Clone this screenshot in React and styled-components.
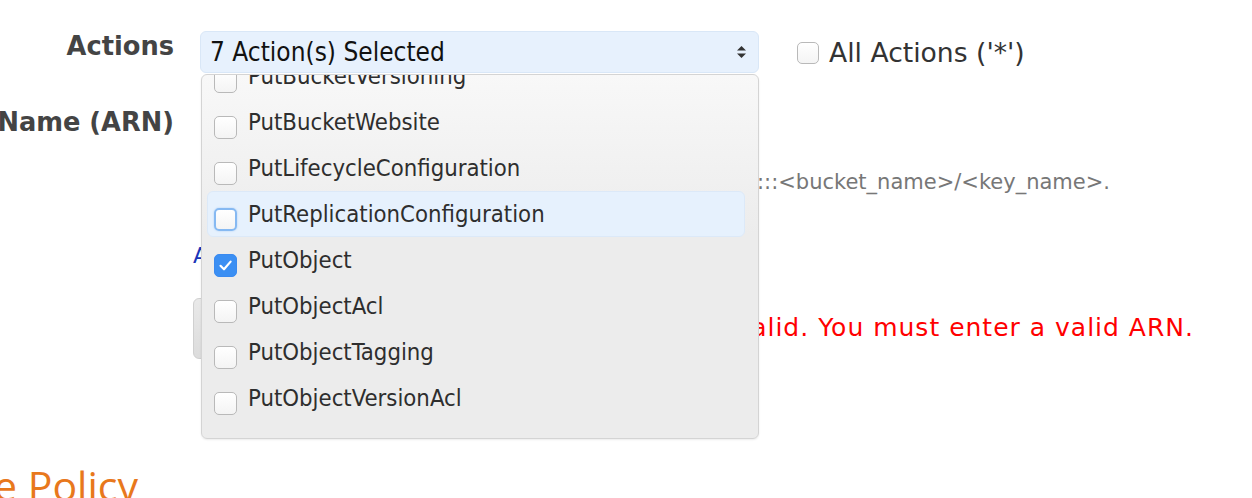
import React, {useEffect, useRef} from "react";
import styled, {createGlobalStyle} from "styled-components";

const GlobalStyle = createGlobalStyle`
  html, body {
    margin: 0;
    padding: 0;
    background: #ffffff;
    overflow: hidden;
  }
  body {
    font-family: "DejaVu Sans", Verdana, sans-serif;
  }
`

const Page = styled.div`
  width: 1252px;
  height: 498px;
  overflow: hidden;
  position: relative;
`

const TopHint = styled.div`
  margin: -22px 0 0 200px;
  height: 20px;
  font-size: 18px;
  line-height: 20px;
  color: #aaa;
  white-space: nowrap;
`

const FormGrid = styled.div`
  display: grid;
  grid-template-columns: 174px 1fr;
  column-gap: 26px;
  margin-top: 33px;
`

const Label = styled.div`
  display: flex;
  justify-content: flex-end;
  align-items: flex-start;
  white-space: nowrap;
  font-weight: bold;
  font-size: 25.7px;
  line-height: 30px;
  color: #444;
  height: 42px;
  margin-top: ${p => p.$top || 0}px;
`

const Field = styled.div`
  display: flex;
  align-items: center;
  gap: 38px;
  margin-top: ${p => p.$top || 0}px;
`

const SelectWrap = styled.div`
  position: relative;
  width: 559px;
`

const SelectBox = styled.div`
  box-sizing: border-box;
  height: 42px;
  display: flex;
  align-items: center;
  justify-content: space-between;
  padding: 0 11px 0 9px;
  background: #e7f1fd;
  border: 1px solid #d9e7f7;
  border-radius: 6px;
  font-family: "DejaVu Sans Condensed", "DejaVu Sans", sans-serif;
  font-size: 26px;
  color: #111;
`

const Panel = styled.div`
  position: absolute;
  top: 43px;
  left: 1px;
  width: 558px;
  height: 365px;
  box-sizing: border-box;
  border: 1px solid #d4d4d4;
  border-radius: 6px;
  background: linear-gradient(#f8f8f8 0px, #ececec 160px, #ececec 100%);
  box-shadow: 0 1px 2px rgba(0,0,0,0.08);
  overflow-y: scroll;
  scrollbar-width: none;
  z-index: 5;
  &::-webkit-scrollbar { display: none; }
`

const OptionList = styled.div`
  padding: 5px 13px 17px 5px;
`

const Option = styled.div`
  display: flex;
  align-items: center;
  gap: 11px;
  height: 46px;
  padding-left: 6px;
  box-sizing: border-box;
  border-radius: 6px;
  background: ${p => p.$active ? "#e6f1fd" : "transparent"};
  border: 1px solid ${p => p.$active ? "#dce9f8" : "transparent"};
  font-family: "DejaVu Sans Condensed", "DejaVu Sans", sans-serif;
  font-size: 23.7px;
  color: #2e2e2e;
`

const Box = styled.span`
  flex: none;
  box-sizing: border-box;
  width: 23px;
  height: 23px;
  margin-top: 10px;
  border-radius: 5px;
  border: ${p => p.$focus ? "2px solid #86b9f2" : p.$checked ? "1px solid #3a8af0" : "1px solid #b9b9b9"};
  box-shadow: ${p => p.$focus ? "0 0 2px #a9cdf5" : "none"};
  background: ${p => p.$checked ? "#3b8ff3" : "linear-gradient(#ffffff, #f4f4f4)"};
  display: flex;
  align-items: center;
  justify-content: center;
`

const AllActions = styled.label`
  display: flex;
  align-items: center;
  gap: 10px;
  font-size: 26.6px;
  color: #333;
  white-space: nowrap;
`

const SmallBox = styled(Box)`
  width: 22px;
  height: 22px;
  margin-top: 2px;
`

const Help = styled.div`
  display: flex;
  justify-content: flex-end;
  width: 910px;
  margin: 21px 0 0 200px;
  font-size: 21px;
  line-height: 24px;
  color: #777;
  white-space: nowrap;
`

const LinkRow = styled.div`
  margin: 49px 0 0 193px;
  font-size: 22px;
  line-height: 26px;
  color: #1a35b8;
`

const ErrorRow = styled.div`
  display: flex;
  align-items: center;
  justify-content: space-between;
  width: 1001px;
  margin: 29px 0 0 193px;
`

const GreyButton = styled.div`
  width: 300px;
  height: 59px;
  border-radius: 6px;
  border: 1px solid #d0d0d0;
  background: linear-gradient(#e9e9e9, #dcdcdc);
`

const ErrorText = styled.div`
  font-size: 25px;
  letter-spacing: 1px;
  color: #ff0000;
  white-space: nowrap;
  margin-top: -3px;
`

const HeadingRow = styled.div`
  display: flex;
  justify-content: flex-end;
  width: 138px;
  margin-top: 104px;
`

const Heading = styled.h2`
  margin: 0;
  font-family: "Open Sans", sans-serif;
  font-weight: 400;
  font-size: 41px;
  line-height: 44px;
  color: #e8781c;
  white-space: nowrap;
`

const Caret = () => (
  <svg width="11" height="14" viewBox="0 0 11 14">
    <path d="M5.5 1 L10 5.5 H1 Z" fill="#333"/>
    <path d="M5.5 13 L10 8.5 H1 Z" fill="#333"/>
  </svg>
)

const Check = () => (
  <svg width="15" height="15" viewBox="0 0 15 15">
    <path d="M2.5 7.8 L6 11.3 L12.6 3.6" fill="none" stroke="#fff" strokeWidth="2.2" strokeLinecap="round" strokeLinejoin="round"/>
  </svg>
)

const actions = [
  {name: "PutBucketPolicy"},
  {name: "PutBucketRequestPayment"},
  {name: "PutBucketTagging"},
  {name: "PutBucketVersioning"},
  {name: "PutBucketWebsite"},
  {name: "PutLifecycleConfiguration"},
  {name: "PutReplicationConfiguration", active: true},
  {name: "PutObject", checked: true},
  {name: "PutObjectAcl"},
  {name: "PutObjectTagging"},
  {name: "PutObjectVersionAcl"},
]

const App = () => {
  const panelRef = useRef(null)
  useEffect(() => {
    // list is scrolled to its end, as in the screenshot
    if (panelRef.current) panelRef.current.scrollTop = panelRef.current.scrollHeight
  }, [])
  return (
    <Page>
      <GlobalStyle/>
      <TopHint>Use multiple statements to add permissions for more than one service.</TopHint>
      <FormGrid>
        <Label>Actions</Label>
        <Field>
          <SelectWrap>
            <SelectBox>
              <span>7 Action(s) Selected</span>
              <Caret/>
            </SelectBox>
            <Panel ref={panelRef}>
              <OptionList>
                {actions.map(a => (
                  <Option key={a.name} $active={a.active}>
                    <Box $checked={a.checked} $focus={a.active}>{a.checked && <Check/>}</Box>
                    <span>{a.name}</span>
                  </Option>
                ))}
              </OptionList>
            </Panel>
          </SelectWrap>
          <AllActions>
            <SmallBox/>
            All Actions ('*')
          </AllActions>
        </Field>
        <Label $top={34}>Amazon Resource Name (ARN)</Label>
        <Field $top={28}/>
      </FormGrid>
      <Help>ARN should follow format arn:aws:s3:::&lt;bucket_name&gt;/&lt;key_name&gt;.</Help>
      <LinkRow>Add Conditions (Optional)</LinkRow>
      <ErrorRow>
        <GreyButton/>
        <ErrorText>ARN is not valid. You must enter a valid ARN.</ErrorText>
      </ErrorRow>
      <HeadingRow>
        <Heading>Step 3: Generate Policy</Heading>
      </HeadingRow>
    </Page>
  )
}

export default App
